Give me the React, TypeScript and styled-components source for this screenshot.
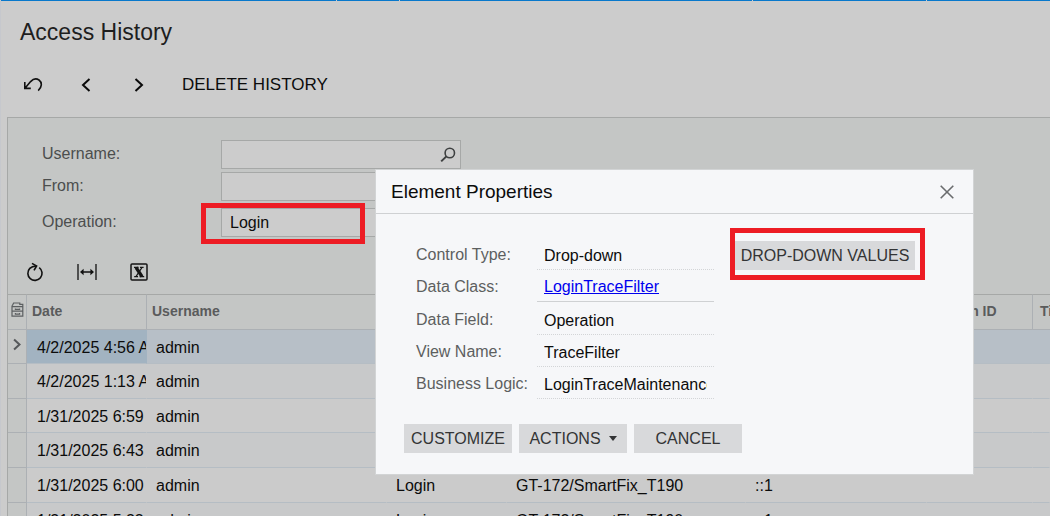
import React from "react";
import styled, { createGlobalStyle, css } from "styled-components";

const GlobalStyle = createGlobalStyle`
  *, *::before, *::after { box-sizing: border-box; }
  body {
    margin: 0;
    background: #cccccc;
    color: #0c0c0c;
    font: 16px/20px "Liberation Sans", Arial, sans-serif;
  }
  button, input, select { font: inherit; color: inherit; margin: 0; border-radius: 0; }
`;

const Page = styled.div`
  position: relative;
  height: 100vh;
  overflow: hidden;
  border-left: 1px solid #c6c8cd;
`;

const TopStrip = styled.div`
  display: grid;
  grid-template-columns: 335px 62px 352px 173px 1fr;
  gap: 1px;
  height: 1px;
`;

const StripPart = styled.span`
  background: #0878cb;
`;

const Title = styled.h1`
  margin: 0;
  padding: 17px 19px 0;
  font-size: 23px;
  line-height: 28px;
  font-weight: 400;
  color: #1e1e1e;
`;

const Toolbar = styled.div`
  display: flex;
  align-items: center;
  gap: 23px;
  padding: 24px 17px 17px;
`;

const ToolButton = styled.button<{ $wide?: boolean }>`
  display: flex;
  align-items: center;
  justify-content: center;
  width: ${(p) => (p.$wide ? "auto" : "30px")};
  height: 30px;
  padding: ${(p) => (p.$wide ? "0 5px" : "0")};
  border: 0;
  background: none;
  font-size: 17px;
  white-space: nowrap;
`;

const Panel = styled.section`
  margin-left: 6px;
  border: solid #a6a8a7;
  border-width: 1px 0 0 1px;
  background: #c4c6c5;
`;

const FilterForm = styled.form`
  display: flex;
  flex-direction: column;
  gap: 3px;
  padding: 22px 34px 0;
`;

const FilterRow = styled.div<{ $apart?: boolean }>`
  display: grid;
  grid-template-columns: 179px 240px;
  margin-top: ${(p) => (p.$apart ? "4px" : "0")};
`;

const FieldLabel = styled.label`
  color: #4c4e4e;
  line-height: 27px;
`;

const FieldBox = styled.div`
  display: flex;
  align-items: center;
  height: 29px;
  padding-right: 4px;
  border: 1px solid #a6a8a7;
  background: #cccccc;
`;

const bareField = css`
  flex: 1;
  min-width: 0;
  border: 0;
  outline: 0;
  background: none;
`;

const TextInput = styled.input`
  ${bareField}
  height: 26px;
  padding: 0 8px;
`;

const Select = styled.select`
  ${bareField}
  appearance: none;
  height: 26px;
  padding: 0 8px;
`;

const GridToolbar = styled.div`
  display: flex;
  gap: 22px;
  padding: 20px 12px 7px;
`;

const Grid = styled.table`
  width: 100%;
  table-layout: fixed;
  border-collapse: separate;
  border-spacing: 0;
`;

const HeadCell = styled.th`
  height: 36px;
  padding: 0 0 3px 5px;
  border: solid #acb0b4;
  border-width: 1px 1px 1px 0;
  border-top-color: #a6a8a7;
  font-size: 14px;
  text-align: left;
  color: #5a5b5c;
  white-space: nowrap;
  overflow: hidden;

  &:last-child { border-right: 0; padding-left: 7px; }
`;

const MarkHead = styled(HeadCell)`
  padding: 0 0 5px;
  line-height: 0;
  text-align: center;
`;

const MarkCell = styled.td`
  padding: 0 0 4px;
  border: solid #acb0b4;
  border-width: 0 1px 1px 0;
  background: #c4c6c5;
  text-align: center;
  line-height: 0;
`;

const Cell = styled.td`
  padding: 2px 0 0 9px;
  border-right: 1px solid transparent;
  border-bottom: 1px solid #b5bdc4;
  background-clip: border-box;
  white-space: nowrap;
  overflow: hidden;
`;

const DateCell = styled(Cell)`
  padding-left: 10px;
`;

const Row = styled.tr<{ $selected?: boolean }>`
  height: 35px;
  background: #cbcbcb;

  &:nth-child(-2n + 3) { height: 34px; }
  &:nth-child(even) { background: #c8c9ca; }

  ${(p) =>
    p.$selected &&
    css`
      background: #b7bfc7;
      ${DateCell} { background: #a2b3c1; }
    `}
`;

const Highlight = styled.div<{ $x: number; $y: number; $w: number; $h: number }>`
  position: absolute;
  left: ${(p) => p.$x}px;
  top: ${(p) => p.$y}px;
  width: ${(p) => p.$w}px;
  height: ${(p) => p.$h}px;
  border: 5px solid #ed1c24;
  pointer-events: none;
`;

const Dialog = styled.div`
  position: absolute;
  left: 374px;
  top: 169px;
  width: 599px;
  border: 1px solid #d2d4d5;
  background: #f6f7f9;
`;

const DialogHead = styled.header`
  display: flex;
  align-items: center;
  justify-content: space-between;
  height: 44px;
  padding: 0 15px;
  border-bottom: 1px solid #cfd1d3;
`;

const DialogTitle = styled.h2`
  margin: 0;
  font-size: 19px;
  line-height: 24px;
  font-weight: 400;
`;

const CloseButton = styled.button`
  display: flex;
  align-items: center;
  justify-content: center;
  width: 22px;
  height: 22px;
  padding: 0;
  border: 0;
  background: none;
`;

const DialogBody = styled.div`
  display: flex;
  align-items: flex-start;
  gap: 21px;
  padding: 27px 20px 0 40px;
`;

const Properties = styled.div`
  display: grid;
  grid-template-columns: 121px 177px;
  row-gap: 3px;
`;

const PropLabel = styled.label`
  line-height: 28px;
  color: #5d5f60;
`;

const PropValue = styled.input`
  width: 177px;
  height: 29px;
  padding: 1px 7px 0;
  border: 0;
  border-bottom: 1px dotted #d3d5d7;
  outline: 0;
  background: none;
`;

const PropLinkBox = styled.div`
  height: 29px;
  margin-bottom: 1px;
  padding: 0 7px;
  border-bottom: 1px solid #cfd1d3;
  line-height: 28px;
`;

const PropLink = styled.a`
  color: #0000ee;
`;

const Button = styled.button<{ $width: number }>`
  display: flex;
  align-items: center;
  justify-content: center;
  gap: 8px;
  width: ${(p) => p.$width}px;
  height: 29px;
  padding: 0;
  border: 0;
  background: #d8d9db;
  color: #333435;
  white-space: nowrap;
`;

const DialogFoot = styled.footer`
  display: flex;
  gap: 7px;
  padding: 25px 28px 21px;
`;

const UndoIcon = () => (
  <svg width="20" height="16" viewBox="0 0 20 16" fill="none" stroke="#111" strokeWidth="1.6">
    <path d="M1.8 5v6.4h6M2 11.2 7.6 4.6C10.2 1.8 13.4 1.2 16 3c3.2 2.4 3.2 7-.8 10.6" />
  </svg>
);

const ChevronIcon = ({ right, small }: { right?: boolean; small?: boolean }) => (
  <svg
    width={small ? 10 : 12}
    height={small ? 13 : 14}
    viewBox="0 0 12 14"
    fill="none"
    stroke={small ? "#55585a" : "#0a0a0a"}
    strokeWidth={small ? 2.4 : 2}
  >
    <path d={right ? "M2.5 1l6.5 6-6.5 6" : "M9.5 1 3 7l6.5 6"} />
  </svg>
);

const SearchIcon = () => (
  <svg width="16" height="16" viewBox="0 0 16 16" fill="none" stroke="#3e4041" strokeWidth="1.6">
    <circle cx="9.8" cy="6" r="4.7" />
    <path d="M6.4 9.4 1.2 14.4" strokeWidth="2" />
  </svg>
);

const RefreshIcon = () => (
  <svg width="18" height="20" viewBox="0 0 18 20" fill="none" stroke="#111" strokeWidth="1.6">
    <path d="M13.2 5.6A7.1 7.1 0 1 1 3.8 6.4C5.2 5 7.4 4.2 10.4 4" />
    <path d="M6 1.4 10.6 4 8 8.4" />
  </svg>
);

const FitIcon = () => (
  <svg width="20" height="18" viewBox="0 0 20 18" fill="none" stroke="#111" strokeWidth="1.3">
    <path d="M1 1v16M19 1v16M4 9h12" />
    <path d="M6.6 5.8 3 9l3.6 3.2zM13.4 5.8 17 9l-3.6 3.2z" fill="#111" stroke="none" />
  </svg>
);

const ExcelIcon = () => (
  <svg width="18" height="18" viewBox="0 0 18 18" fill="none" stroke="#151515">
    <rect x="1" y="1" width="16" height="16" rx="1" strokeWidth="1.5" />
    <path d="M6 4.5l6 9" strokeWidth="3.2" />
    <path d="M12 4.5l-6 9M4 4.4h4.6M10 4.4h3.6M4.2 13.6H8M9.6 13.6h4.6" strokeWidth="1.3" />
  </svg>
);

const FilesIcon = () => (
  <svg width="13" height="15" viewBox="0 0 13 15" fill="none" stroke="#5c5f61" strokeWidth="1.2">
    <path d="M1.4 3.4 2.6 1h6.2v1.4h3v11.8H1V3.4M1 4.6h11M1 9.2h11M4.4 6.4v1h4.2v-1M4.4 11v1.2h4.2V11" />
  </svg>
);

const CloseIcon = () => (
  <svg width="14" height="14" viewBox="0 0 14 14" stroke="#6a6c6e" strokeWidth="1.6">
    <path d="M.7.7l12.6 12.6M13.3.7.7 13.3" />
  </svg>
);

const CaretIcon = () => (
  <svg width="8" height="5" viewBox="0 0 8 5">
    <path d="M0 0h8L4 5z" fill="#333435" />
  </svg>
);

const columns = [
  { name: "Date", width: 120 },
  { name: "Username", width: 240 },
  { name: "Operation", width: 120 },
  { name: "Host", width: 239 },
  { name: "IP Address", width: 181 },
  { name: "Screen ID", width: 106 },
  { name: "Title", width: undefined },
];

const dates = [
  "4/2/2025 4:56 AM",
  "4/2/2025 1:13 AM",
  "1/31/2025 6:59 AM",
  "1/31/2025 6:43 AM",
  "1/31/2025 6:00 AM",
  "1/31/2025 5:23 AM",
];

const properties = [
  { id: "control-type", label: "Control Type:", value: "Drop-down" },
  { id: "data-class", label: "Data Class:", value: "LoginTraceFilter", link: true },
  { id: "data-field", label: "Data Field:", value: "Operation" },
  { id: "view-name", label: "View Name:", value: "TraceFilter" },
  { id: "business-logic", label: "Business Logic:", value: "LoginTraceMaintenance" },
];

export default function App() {
  return (
    <Page>
      <GlobalStyle />
      <TopStrip>
        {[0, 1, 2, 3, 4].map((n) => (
          <StripPart key={n} />
        ))}
      </TopStrip>
      <Title>Access History</Title>
      <Toolbar>
        <ToolButton aria-label="Undo"><UndoIcon /></ToolButton>
        <ToolButton aria-label="Previous"><ChevronIcon /></ToolButton>
        <ToolButton aria-label="Next"><ChevronIcon right /></ToolButton>
        <ToolButton $wide>DELETE HISTORY</ToolButton>
      </Toolbar>

      <Panel>
        <FilterForm>
          <FilterRow>
            <FieldLabel htmlFor="username">Username:</FieldLabel>
            <FieldBox>
              <TextInput id="username" />
              <SearchIcon />
            </FieldBox>
          </FilterRow>
          <FilterRow>
            <FieldLabel htmlFor="from">From:</FieldLabel>
            <FieldBox><TextInput id="from" /></FieldBox>
          </FilterRow>
          <FilterRow $apart>
            <FieldLabel htmlFor="operation">Operation:</FieldLabel>
            <FieldBox>
              <Select id="operation" defaultValue="Login">
                <option>Login</option>
              </Select>
            </FieldBox>
          </FilterRow>
        </FilterForm>

        <GridToolbar>
          <ToolButton aria-label="Refresh"><RefreshIcon /></ToolButton>
          <ToolButton aria-label="Fit to screen"><FitIcon /></ToolButton>
          <ToolButton aria-label="Export to Excel"><ExcelIcon /></ToolButton>
        </GridToolbar>

        <Grid>
          <colgroup>
            <col width={19} />
            {columns.map((c) => (
              <col key={c.name} width={c.width} />
            ))}
          </colgroup>
          <thead>
            <tr>
              <MarkHead aria-label="Files"><FilesIcon /></MarkHead>
              {columns.map((c) => (
                <HeadCell key={c.name}>{c.name}</HeadCell>
              ))}
            </tr>
          </thead>
          <tbody>
            {dates.map((date, i) => (
              <Row key={date} $selected={i === 0}>
                <MarkCell>{i === 0 && <ChevronIcon right small />}</MarkCell>
                <DateCell>{date}</DateCell>
                <Cell>admin</Cell>
                <Cell>Login</Cell>
                <Cell>GT-172/SmartFix_T190</Cell>
                <Cell>::1</Cell>
                <Cell />
                <Cell />
              </Row>
            ))}
          </tbody>
        </Grid>
      </Panel>

      <Highlight $x={200} $y={203} $w={164} $h={41} />

      <Dialog role="dialog" aria-labelledby="dialog-title">
        <DialogHead>
          <DialogTitle id="dialog-title">Element Properties</DialogTitle>
          <CloseButton aria-label="Close"><CloseIcon /></CloseButton>
        </DialogHead>
        <DialogBody>
          <Properties>
            {properties.map((p) => (
              <React.Fragment key={p.id}>
                <PropLabel htmlFor={p.id}>{p.label}</PropLabel>
                {p.link ? (
                  <PropLinkBox>
                    <PropLink id={p.id} href="#class">{p.value}</PropLink>
                  </PropLinkBox>
                ) : (
                  <PropValue id={p.id} defaultValue={p.value} readOnly />
                )}
              </React.Fragment>
            ))}
          </Properties>
          <Button $width={180}>DROP-DOWN VALUES</Button>
        </DialogBody>
        <DialogFoot>
          <Button $width={108}>CUSTOMIZE</Button>
          <Button $width={108}>ACTIONS <CaretIcon /></Button>
          <Button $width={108}>CANCEL</Button>
        </DialogFoot>
      </Dialog>

      <Highlight $x={729} $y={228} $w={195} $h={52} />
    </Page>
  );
}
